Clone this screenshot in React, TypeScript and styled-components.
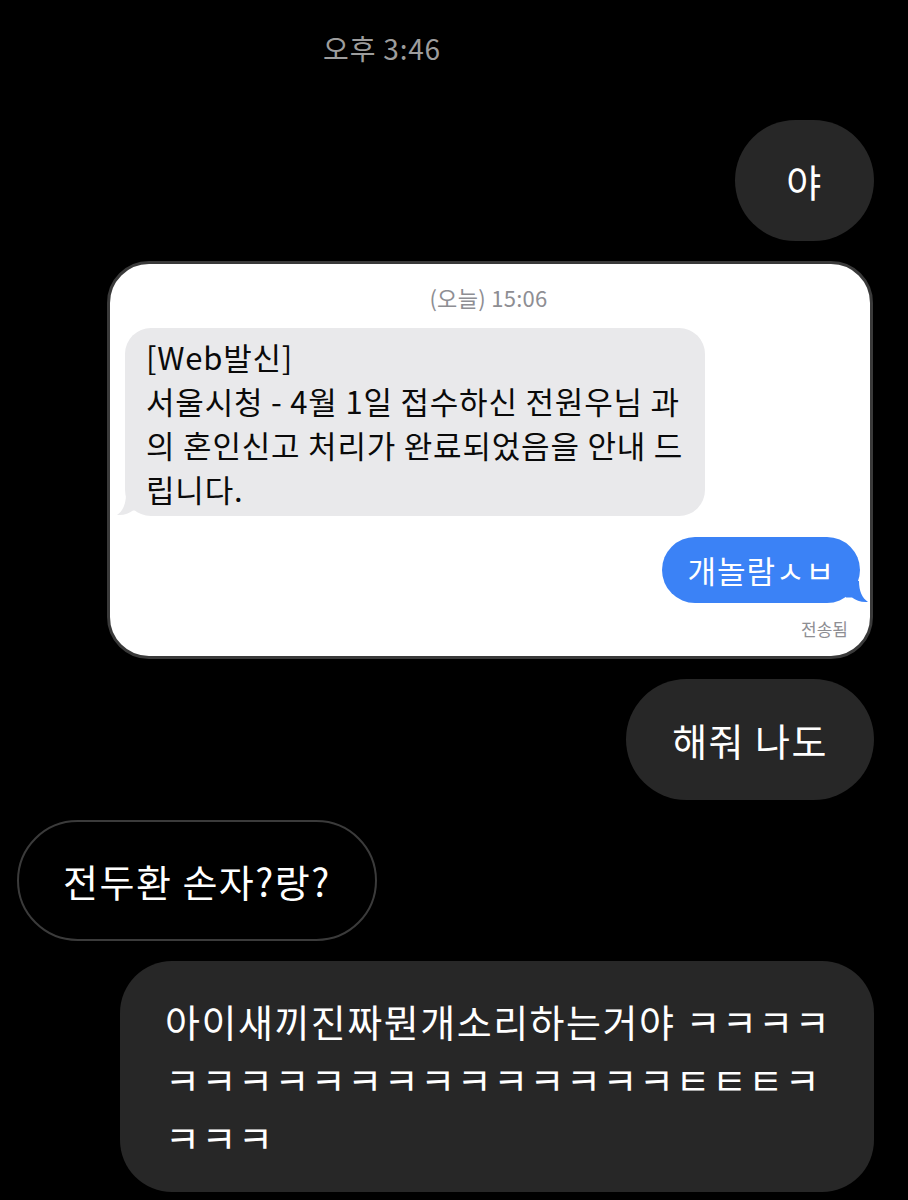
import React from 'react';
import styled, { createGlobalStyle } from 'styled-components';

// --- Global ---

const GlobalStyle = createGlobalStyle`
  html, body, #root {
    margin: 0;
    padding: 0;
    background: #000;
    min-height: 100vh;
  }
  body {
    font-family: "Noto Sans CJK KR", "Noto Sans", sans-serif;
    -webkit-font-smoothing: antialiased;
  }
`;

// --- Layout ---

const Screen = styled.div`
  display: flex;
  flex-direction: column;
  gap: 20px;
  padding: 30px 34px 0 17px;
  box-sizing: border-box;
  width: 908px;
  min-height: 1200px;
  background: #000;
`;

const TimeStamp = styled.div`
  align-self: center;
  margin-left: -127px;
  margin-bottom: 34px;
  font-size: 28px;
  line-height: 36px;
  color: #9d9d9d;
  letter-spacing: 0.8px;
`;

const Row = styled.div<{ $side: 'left' | 'right' }>`
  display: flex;
  justify-content: ${({ $side }) => ($side === 'right' ? 'flex-end' : 'flex-start')};
`;

// --- Dark chat bubbles ---

const DarkBubble = styled.div<{ $outline?: boolean; $minWidth?: number; $tall?: boolean }>`
  box-sizing: border-box;
  min-width: ${({ $minWidth }) => ($minWidth ? `${$minWidth}px` : 'auto')};
  padding: ${({ $tall, $outline }) =>
    $tall ? '31px 30px 26px 45px' : $outline ? '36px 44px' : '38px 46px'};
  border-radius: ${({ $tall }) => ($tall ? '52px' : '61px')};
  background: ${({ $outline }) => ($outline ? '#000' : '#272727')};
  border: ${({ $outline }) => ($outline ? '2px solid #3b3b3b' : 'none')};
  color: #fff;
  font-size: 38px;
  letter-spacing: 1.5px;
  line-height: ${({ $tall }) => ($tall ? '58px' : '45px')};
  text-align: ${({ $tall }) => ($tall ? 'left' : 'center')};
  white-space: pre-line;
  width: ${({ $tall }) => ($tall ? '754px' : 'auto')};
`;

// --- Captured SMS card ---

const Card = styled.div`
  box-sizing: border-box;
  width: 766px;
  margin-left: 90px;
  height: 398px;
  background: #fff;
  border: 3px solid #3a3a3a;
  border-radius: 42px;
  padding: 20px 10px 0 15px;
  display: flex;
  flex-direction: column;
`;

const CardTime = styled.div`
  align-self: center;
  margin-right: 8px;
  font-size: 22px;
  line-height: 26px;
  color: #8e8e93;
  letter-spacing: 0.3px;
`;

const IncomingBubble = styled.div`
  position: relative;
  box-sizing: border-box;
  width: 580px;
  margin-top: 18px;
  padding: 7px 4px 5px 21px;
  border-radius: 26px;
  background: #e9e9eb;
  color: #0a0a0a;
  font-size: 31px;
  letter-spacing: 0.8px;
  line-height: 44px;
  white-space: pre-line;
`;

const OutgoingRow = styled.div`
  display: flex;
  justify-content: flex-end;
  margin-top: 21px;
`;

const OutgoingBubble = styled.div`
  position: relative;
  padding: 0 25px;
  height: 66px;
  line-height: 66px;
  border-radius: 33px;
  background: #3b82f6;
  color: #fff;
  font-size: 31px;
  letter-spacing: 1px;
`;

const Tail = styled.svg<{ $side: 'left' | 'right' }>`
  position: absolute;
  bottom: 0;
  width: 22px;
  height: 22px;
  ${({ $side }) => ($side === 'left' ? 'left: -8px;' : 'right: -8px; transform: scaleX(-1);')}
`;

const Delivered = styled.div`
  align-self: flex-end;
  margin-top: 14px;
  margin-right: 12px;
  font-size: 17px;
  line-height: 24px;
  color: #8e8e93;
`;

const BubbleTail: React.FC<{ side: 'left' | 'right'; color: string }> = ({ side, color }) => (
  <Tail $side={side} viewBox="0 0 22 22" aria-hidden="true">
    <path d="M9 0 C9 10 6 17 0 21 C7 21.5 12 19.5 16 16.5 L22 16.5 L22 0 Z" fill={color} />
  </Tail>
);

export default function App() {
  return (
    <>
      <GlobalStyle />
      <Screen>
        <TimeStamp>오후 3:46</TimeStamp>

        <Row $side="right">
          <DarkBubble $minWidth={139}>야</DarkBubble>
        </Row>

        <Card>
          <CardTime>(오늘) 15:06</CardTime>
          <IncomingBubble>
            {'[Web발신]\n서울시청 - 4월 1일 접수하신 전원우님 과\n의 혼인신고 처리가 완료되었음을 안내 드\n립니다.'}
            <BubbleTail side="left" color="#e9e9eb" />
          </IncomingBubble>
          <OutgoingRow>
            <OutgoingBubble>
              개놀람ㅅㅂ
              <BubbleTail side="right" color="#3b82f6" />
            </OutgoingBubble>
          </OutgoingRow>
          <Delivered>전송됨</Delivered>
        </Card>

        <Row $side="right">
          <DarkBubble>해줘 나도</DarkBubble>
        </Row>

        <Row $side="left">
          <DarkBubble $outline>전두환 손자?랑?</DarkBubble>
        </Row>

        <Row $side="right">
          <DarkBubble $tall>
            {'아이새끼진짜뭔개소리하는거야 ㅋㅋㅋㅋ\nㅋㅋㅋㅋㅋㅋㅋㅋㅋㅋㅋㅋㅋㅋㅌㅌㅌㅋ\nㅋㅋㅋ'}
          </DarkBubble>
        </Row>
      </Screen>
    </>
  );
}
